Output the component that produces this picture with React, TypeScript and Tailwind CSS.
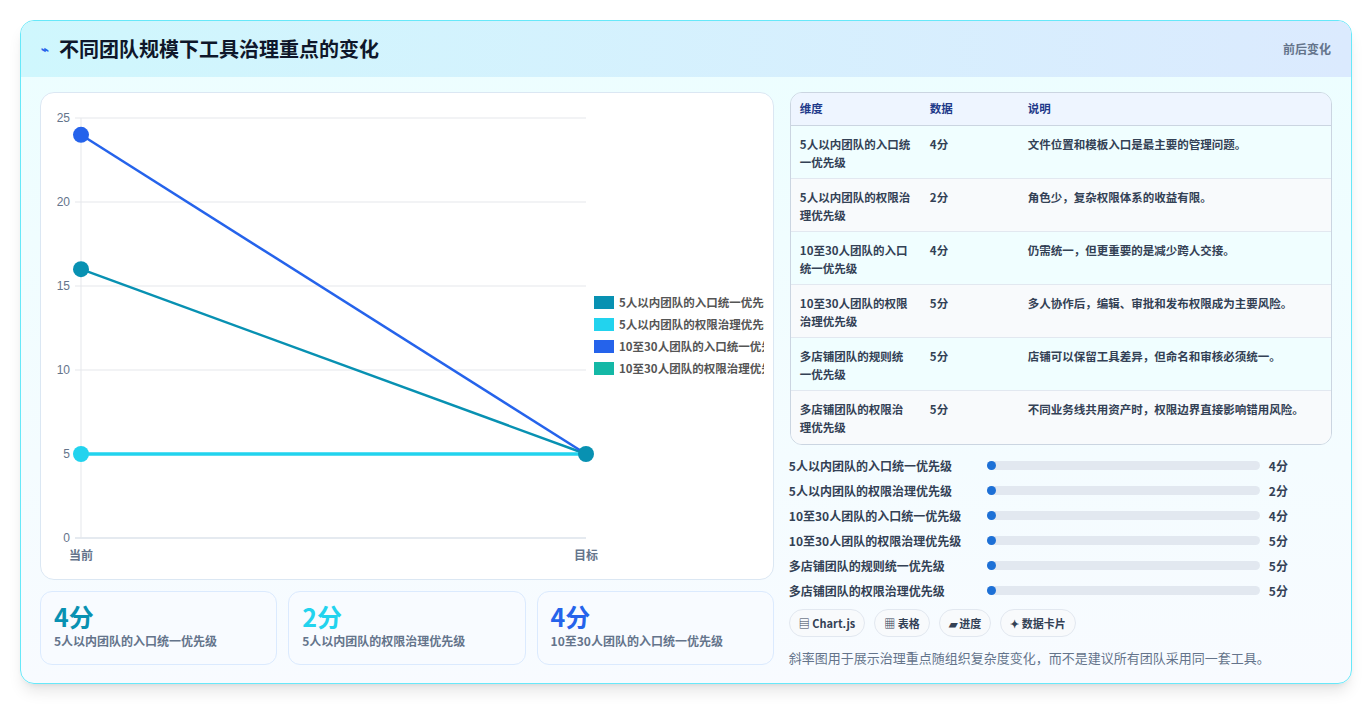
import React from "react";

const F = { fontFamily: '"Noto Sans CJK SC", "Noto Sans", sans-serif' };

const rows = [
  ["5人以内团队的入口统一优先级", "4分", "文件位置和模板入口是最主要的管理问题。"],
  ["5人以内团队的权限治理优先级", "2分", "角色少，复杂权限体系的收益有限。"],
  ["10至30人团队的入口统一优先级", "4分", "仍需统一，但更重要的是减少跨人交接。"],
  ["10至30人团队的权限治理优先级", "5分", "多人协作后，编辑、审批和发布权限成为主要风险。"],
  ["多店铺团队的规则统一优先级", "5分", "店铺可以保留工具差异，但命名和审核必须统一。"],
  ["多店铺团队的权限治理优先级", "5分", "不同业务线共用资产时，权限边界直接影响错用风险。"],
];

function Chart() {
  const x0 = 40, x1 = 545, top = 25, bot = 445;
  const y = (v: number) => bot - (v / 25) * (bot - top);
  const lines = [
    { a: 16, b: 5, c: "#0891b2" },
    { a: 5, b: 5, c: "#22d3ee" },
    { a: 24, b: 5, c: "#2563eb" },
  ];
  const legend = [
    ["#0891b2", "5人以内团队的入口统一优先级"],
    ["#22d3ee", "5人以内团队的权限治理优先级"],
    ["#2563eb", "10至30人团队的入口统一优先级"],
    ["#14b8a6", "10至30人团队的权限治理优先级"],
  ];
  return (
    <svg width="724" height="480" className="block">
      <defs>
        <clipPath id="cl"><rect x="0" y="0" width="723" height="480" /></clipPath>
      </defs>
      {[0, 5, 10, 15, 20, 25].map((v) => (
        <g key={v}>
          <line x1={x0 - 6} x2={x1} y1={y(v)} y2={y(v)} stroke={v === 0 ? "#cbd5e1" : "#e5e7eb"} />
          <text x={x0 - 11} y={y(v) + 4} textAnchor="end" fontSize="12" fill="#64748b" fontFamily="Liberation Sans, sans-serif">{v}</text>
        </g>
      ))}
      <line x1={x0} x2={x0} y1={top} y2={bot} stroke="#e5e7eb" />
      <text x={x0} y={bot + 22} textAnchor="middle" fontSize="12" fill="#64748b" fontWeight="bold" style={F}>当前</text>
      <text x={x1} y={bot + 22} textAnchor="middle" fontSize="12" fill="#64748b" fontWeight="bold" style={F}>目标</text>
      {lines.map((l, i) => (
        <line key={i} x1={x0} y1={y(l.a)} x2={x1} y2={y(l.b)} stroke={l.c} strokeWidth={i === 1 ? 3.5 : 2.5} />
      ))}
      {lines.map((l, i) => (
        <circle key={"a" + i} cx={x0} cy={y(l.a)} r="8" fill={l.c} />
      ))}
      <circle cx={x1} cy={y(5)} r="8" fill="#0891b2" />
      <g clipPath="url(#cl)">
        {legend.map(([c, t], i) => (
          <g key={i}>
            <rect x="553" y={203 + i * 22} width="20" height="13" fill={c} />
            <text x="578" y={214 + i * 22} fontSize="11.5" fill="#555" fontWeight="bold" style={F}>{t}</text>
          </g>
        ))}
      </g>
    </svg>
  );
}

export default function App() {
  return (
    <div className="w-[1372px] h-[704px] bg-white p-[20px]" style={F}>
      <div className="w-[1332px] h-[664px] rounded-[14px] border border-[#67e8f9] overflow-hidden bg-gradient-to-b from-[#ecfeff] to-[#f8fbff] shadow-lg flex flex-col">
        <div className="h-[56px] shrink-0 bg-gradient-to-r from-[#cff7fd] to-[#dbeafe] flex items-center justify-between px-[20px]">
          <div className="flex items-center gap-[10px]">
            <span className="text-[#2563eb] text-[13px] font-bold">⌁</span>
            <span className="text-[20px] font-bold text-[#0f172a]">不同团队规模下工具治理重点的变化</span>
          </div>
          <span className="text-[12px] font-bold text-[#64748b]">前后变化</span>
        </div>
        <div className="flex gap-[16px] px-[19px] pt-[15px]">
          <div className="w-[735px] flex flex-col gap-[11px]">
            <div className="h-[488px] rounded-[14px] border border-[#dbe7f3] bg-white overflow-hidden">
              <Chart />
            </div>
            <div className="grid grid-cols-3 gap-[11px]">
              {[
                ["4分", "text-[#0891b2]", "5人以内团队的入口统一优先级"],
                ["2分", "text-[#22d3ee]", "5人以内团队的权限治理优先级"],
                ["4分", "text-[#2563eb]", "10至30人团队的入口统一优先级"],
              ].map(([v, c, l], i) => (
                <div key={i} className="h-[74px] rounded-[12px] border border-[#dbeafe] bg-[#f8fbff] px-[13px] pt-[9px]">
                  <div className={`text-[25px] leading-[30px] font-bold ${c}`}>{v}</div>
                  <div className="text-[12px] font-bold text-[#64748b] mt-[1px]">{l}</div>
                </div>
              ))}
            </div>
          </div>
          <div className="w-[543px] flex flex-col">
            <div className="rounded-[12px] border border-[#cbd5e1] overflow-hidden">
              <div className="h-[33px] bg-[#eef5ff] flex items-center text-[11.5px] font-bold text-[#1e3a8a] border-b border-[#cbd5e1]">
                <div className="w-[139px] pl-[9px]">维度</div>
                <div className="w-[98px]">数据</div>
                <div>说明</div>
              </div>
              {rows.map((r, i) => (
                <div key={i} className={`h-[53px] flex text-[11.5px] font-bold text-[#334155] leading-[18px] pt-[9px] ${i < 5 ? "border-b border-[#e2e8f0]" : ""} ${i % 2 === 0 ? "bg-[#f0feff]" : "bg-[#f8fafc]"}`}>
                  <div className="w-[139px] pl-[9px] pr-[18px]">{r[0]}</div>
                  <div className="w-[98px]">{r[1]}</div>
                  <div className="flex-1">{r[2]}</div>
                </div>
              ))}
            </div>
            <div className="mt-[8px] flex flex-col">
              {rows.map((r, i) => (
                <div key={i} className="h-[25px] flex items-center text-[12px] font-bold text-[#334155]">
                  <div className="w-[198px] -ml-px">{r[0]}</div>
                  <div className="w-[273px] h-[9px] rounded-full bg-[#e2e8f0]">
                    <div className="w-[9px] h-[9px] rounded-full bg-[#1d70d6]" />
                  </div>
                  <div className="ml-[9px]">{r[1]}</div>
                </div>
              ))}
            </div>
            <div className="flex gap-[9px] mt-[6px] -ml-px">
              {["▤ Chart.js", "▦ 表格", "▰ 进度", "✦ 数据卡片"].map((t) => (
                <div key={t} className="h-[28px] px-[9px] rounded-full border border-[#e2e8f0] bg-[#f8fafc] flex items-center text-[11px] font-bold text-[#334155]">{t}</div>
              ))}
            </div>
            <div className="mt-[11px] -ml-px text-[13px] text-[#64748b]">斜率图用于展示治理重点随组织复杂度变化，而不是建议所有团队采用同一套工具。</div>
          </div>
        </div>
      </div>
    </div>
  );
}
